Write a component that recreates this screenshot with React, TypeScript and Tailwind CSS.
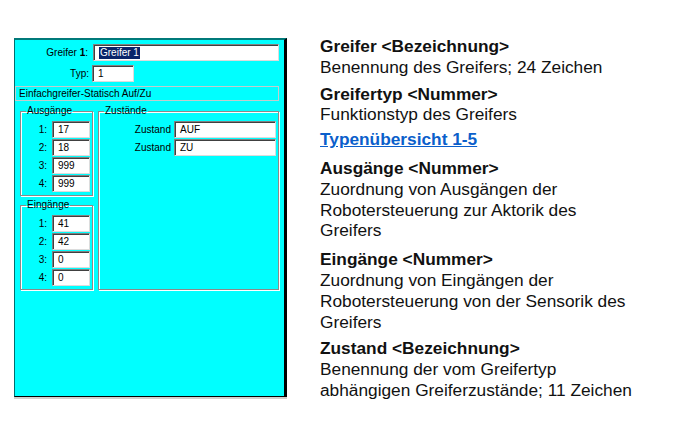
import React from "react";

const inputCls =
  "h-[17px] bg-white border border-t-[#808080] border-l-[#808080] border-r-[#dcdcdc] border-b-[#dcdcdc] shadow-[inset_1px_1px_0_#404040] flex items-center pl-[5px] text-[10px] leading-none text-black";

function Field({ w, value }: { w: string; value: string }) {
  return <div className={`${inputCls} ${w}`}>{value}</div>;
}

function NumRow({ label, value }: { label: string; value: string }) {
  return (
    <div className="flex items-center h-[17px]">
      <div className="w-[26px] text-right">{label}</div>
      <div className="w-[5px]" />
      <Field w="w-[38px]" value={value} />
    </div>
  );
}

function Group({
  title,
  className,
  children,
}: {
  title: string;
  className: string;
  children: React.ReactNode;
}) {
  return (
    <fieldset
      className={`border border-[#8a8a8a] shadow-[1px_1px_0_#ffffff,inset_1px_1px_0_#ffffff] m-0 p-0 ${className}`}
    >
      <legend className="ml-[5px] px-[1px] text-[10px] leading-[12px]">{title}</legend>
      {children}
    </fieldset>
  );
}

export default function App() {
  return (
    <div className="w-[682px] h-[437px] bg-white flex font-['Liberation_Sans',Arial,sans-serif]">
      {/* Dialog panel */}
      <div className="ml-[14px] mt-[38px] w-[273px] h-[361px] flex flex-col">
        <div className="w-[273px] h-[359px] bg-[#00ffff] border-l border-t-2 border-l-[#006f6f] border-t-[#007a7a] border-r-[3px] border-r-black border-b border-b-black text-[10px] text-black flex flex-col">
          {/* Row 1 */}
          <div className="mt-[4px] flex items-center h-[17px]">
            <div className="w-[73px] text-right">
              Greifer <span className="font-bold">1</span>:
            </div>
            <div className="w-[5px]" />
            <div className={`${inputCls} w-[186px]`}>
              <span className="bg-[#0a246a] text-white px-[1px] leading-[12px]">Greifer 1</span>
            </div>
          </div>
          {/* Row 2 */}
          <div className="mt-[4px] flex items-center h-[17px]">
            <div className="w-[74px] text-right">Typ:</div>
            <div className="w-[3px]" />
            <Field w="w-[42px]" value="1" />
          </div>
          {/* Row 3 */}
          <div className="mt-[4px] w-[264px] h-[15px] border border-[#c4cccc] flex items-center pl-[3px]">
            Einfachgreifer-Statisch Auf/Zu
          </div>
          {/* Row 4 */}
          <div className="mt-[4px] flex">
            <div className="ml-[5px] flex flex-col">
              <Group title="Ausgänge" className="w-[73px] h-[91px]">
                <div className="mt-[4px] flex flex-col gap-[1px]">
                  <NumRow label="1:" value="17" />
                  <NumRow label="2:" value="18" />
                  <NumRow label="3:" value="999" />
                  <NumRow label="4:" value="999" />
                </div>
              </Group>
              <Group title="Eingänge" className="mt-[3px] w-[73px] h-[91px]">
                <div className="mt-[4px] flex flex-col gap-[1px]">
                  <NumRow label="1:" value="41" />
                  <NumRow label="2:" value="42" />
                  <NumRow label="3:" value="0" />
                  <NumRow label="4:" value="0" />
                </div>
              </Group>
            </div>
            <Group title="Zustände" className="ml-[5px] w-[181px] h-[185px]">
              <div className="mt-[4px] flex flex-col gap-[1px]">
                <div className="flex items-center h-[17px]">
                  <div className="w-[72px] text-right">Zustand</div>
                  <div className="w-[3px]" />
                  <Field w="w-[102px]" value="AUF" />
                </div>
                <div className="flex items-center h-[17px]">
                  <div className="w-[72px] text-right">Zustand</div>
                  <div className="w-[3px]" />
                  <Field w="w-[102px]" value="ZU" />
                </div>
              </div>
            </Group>
          </div>
        </div>
        <div className="w-[273px] h-[2px] bg-[#d0d0cc]" />
      </div>

      {/* Description column */}
      <div className="ml-[33px] mt-[36px] flex flex-col text-[17.3px] leading-[20.8px] text-[#111111]">
        <div>
          <div className="font-bold">Greifer &lt;Bezeichnung&gt;</div>
          <div>Benennung des Greifers; 24 Zeichen</div>
        </div>
        <div className="mt-[6px]">
          <div className="font-bold">Greifertyp &lt;Nummer&gt;</div>
          <div>Funktionstyp des Greifers</div>
        </div>
        <div className="mt-[4px]">
          <a className="font-bold text-[#0b5fcb] underline">Typenübersicht 1-5</a>
        </div>
        <div className="mt-[8px]">
          <div className="font-bold">Ausgänge &lt;Nummer&gt;</div>
          <div>Zuordnung von Ausgängen der</div>
          <div>Robotersteuerung zur Aktorik des</div>
          <div>Greifers</div>
        </div>
        <div className="mt-[8px]">
          <div className="font-bold">Eingänge &lt;Nummer&gt;</div>
          <div>Zuordnung von Eingängen der</div>
          <div>Robotersteuerung von der Sensorik des</div>
          <div>Greifers</div>
        </div>
        <div className="mt-[6px]">
          <div className="font-bold">Zustand &lt;Bezeichnung&gt;</div>
          <div>Benennung der vom Greifertyp</div>
          <div>abhängigen Greiferzustände; 11 Zeichen</div>
        </div>
      </div>
    </div>
  );
}
